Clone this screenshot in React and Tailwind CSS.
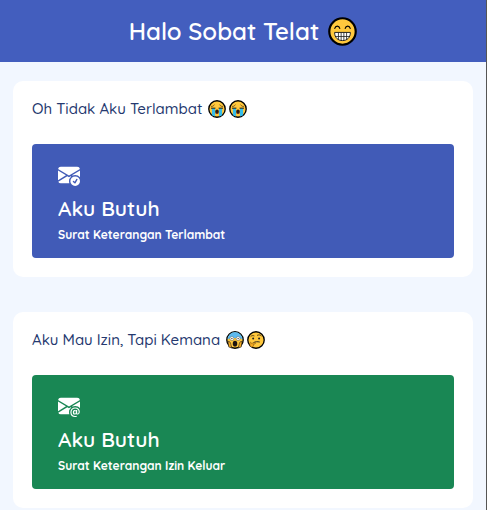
import { BsEnvelopeAtFill, BsEnvelopeCheckFill } from "react-icons/bs";

function Face({ label, className, children }) {
  return (
    <svg viewBox="0 0 32 32" role="img" aria-label={label} className={className}>
      <circle cx="16" cy="16" r="14.6" fill="#ffc83d" stroke="#000" strokeWidth="2.4" />
      {children}
    </svg>
  );
}

function Grin({ className }) {
  return (
    <Face label="Wajah menyeringai" className={className}>
      <path d="M7.500 12.500c.8-3.200 4.700-3.200 5.500 0M19 12.500c.8-3.200 4.700-3.200 5.500 0" fill="none" stroke="#000" strokeWidth="1.300" strokeLinecap="round" />
      <path d="M7.300 17h17.400c0 5.800-3.600 9-8.700 9s-8.700-3.200-8.700-9z" fill="#fff" stroke="#222" strokeWidth="1.100" strokeLinejoin="round" />
      <path d="M7.800 21.500h16.400M11.500 17v7.600M14.500 17v9M17.500 17v9M20.500 17v7.600" fill="none" stroke="#222" strokeWidth=".9" />
    </Face>
  );
}

function Crying({ className }) {
  return (
    <Face label="Wajah menangis" className={className}>
      <path d="M6 11.500c2 .2 4-.8 5.200-2.800M26 11.500c-2 .2-4-.8-5.200-2.800" fill="none" stroke="#5b3a10" strokeWidth="1.300" strokeLinecap="round" />
      <path d="M7 14.500h5.500v15L7 27zM19.500 14.500H25V27l-5.500 2.500z" fill="#35bdea" />
      <path d="M6 14.500h6.500M19.500 14.500H26" fill="none" stroke="#111" strokeWidth="1.700" strokeLinecap="round" />
      <ellipse cx="16" cy="21" rx="3.200" ry="4" fill="#2b1b12" />
      <path d="M13.800 23.500a3 2 0 0 1 4.400 0z" fill="#f03a4b" />
    </Face>
  );
}

function Scream({ className }) {
  return (
    <Face label="Wajah menjerit ketakutan" className={className}>
      <path d="M2.700 15a13.300 13.300 0 0 1 26.600 0C24 11.500 8 11.500 2.700 15z" fill="#5db9ee" />
      <circle cx="10.500" cy="13.500" r="3.600" fill="#fff" stroke="#333" strokeWidth=".7" />
      <circle cx="21.500" cy="13.500" r="3.600" fill="#fff" stroke="#333" strokeWidth=".7" />
      <circle cx="10.500" cy="13.500" r="1.100" />
      <circle cx="21.500" cy="13.500" r="1.100" />
      <ellipse cx="16" cy="22.500" rx="4" ry="5" fill="#1d1410" />
      <path d="M3.500 18.500c3-1 4.500 2 5.200 5.500l1.300 6-5-1.500zM28.500 18.500c-3-1-4.500 2-5.200 5.500L22 30l5-1.500z" fill="#f5a91f" stroke="#222" strokeWidth="1.100" />
    </Face>
  );
}

function Thinking({ className }) {
  return (
    <Face label="Wajah berpikir" className={className}>
      <path d="M7 9.500c1.500-1.500 3.500-1.800 5.500-1M18.500 7.500c2.500-1.200 5-.6 6.500 1" fill="none" stroke="#3a260c" strokeWidth="1.500" strokeLinecap="round" />
      <circle cx="11" cy="13.500" r="1.800" fill="#222" />
      <circle cx="21.500" cy="13.500" r="1.800" fill="#222" />
      <path d="M12 20.500c3-1.800 6.500-1.800 10-1" fill="none" stroke="#222" strokeWidth="1.700" strokeLinecap="round" />
      <path d="M5 21c1.500-1.500 2.500-.8 3 1l5.500-1.500c2-.2 2.300 2 .5 2.500l-3 1c1.500 2.500-.5 4.800-3 4.500C5.500 28 4.500 25 5 21z" fill="#f5a91f" stroke="#5b3a10" strokeWidth=".8" />
    </Face>
  );
}

function LetterCard({ question, faces, icon: Icon, color, detail }) {
  return (
    <section className="rounded-[10px] bg-white p-[19px]">
      <h2 className="flex h-[18px] items-center text-[15px] leading-[18px] font-medium text-[#25396f]">
        {question}
        <span className="ml-[6px] flex gap-[3px]">
          {faces.map((FaceIcon, i) => (
            <FaceIcon key={i} className="size-[18px]" />
          ))}
        </span>
      </h2>
      <a href="#" className={`mt-[26px] block rounded-[4px] px-[26px] pt-[20px] pb-[13px] text-white ${color}`}>
        <Icon className="size-[22px]" aria-hidden="true" />
        <span className="mt-[8px] block text-[21px] leading-[28px] font-semibold">Aku Butuh</span>
        <span className="mt-[3px] block text-[12px] leading-[20px] font-bold">{detail}</span>
      </a>
    </section>
  );
}

export default function App() {
  return (
    <div className="min-h-screen border-r border-[#555] bg-[#f2f7ff] font-['Quicksand','Lato',sans-serif]">
      <header className="flex h-[62px] items-center justify-center bg-[#435ebe] text-white">
        <h1 className="flex items-center gap-[9px] text-[24px] leading-[32px] font-semibold">
          Halo Sobat Telat
          <Grin className="size-[29px]" />
        </h1>
      </header>
      <main className="flex flex-col gap-[35px] px-[13px] pt-[19px]">
        <LetterCard
          question="Oh Tidak Aku Terlambat"
          faces={[Crying, Crying]}
          icon={BsEnvelopeCheckFill}
          color="bg-[#415bb7]"
          detail="Surat Keterangan Terlambat"
        />
        <LetterCard
          question="Aku Mau Izin, Tapi Kemana"
          faces={[Scream, Thinking]}
          icon={BsEnvelopeAtFill}
          color="bg-[#198754]"
          detail="Surat Keterangan Izin Keluar"
        />
      </main>
    </div>
  );
}
